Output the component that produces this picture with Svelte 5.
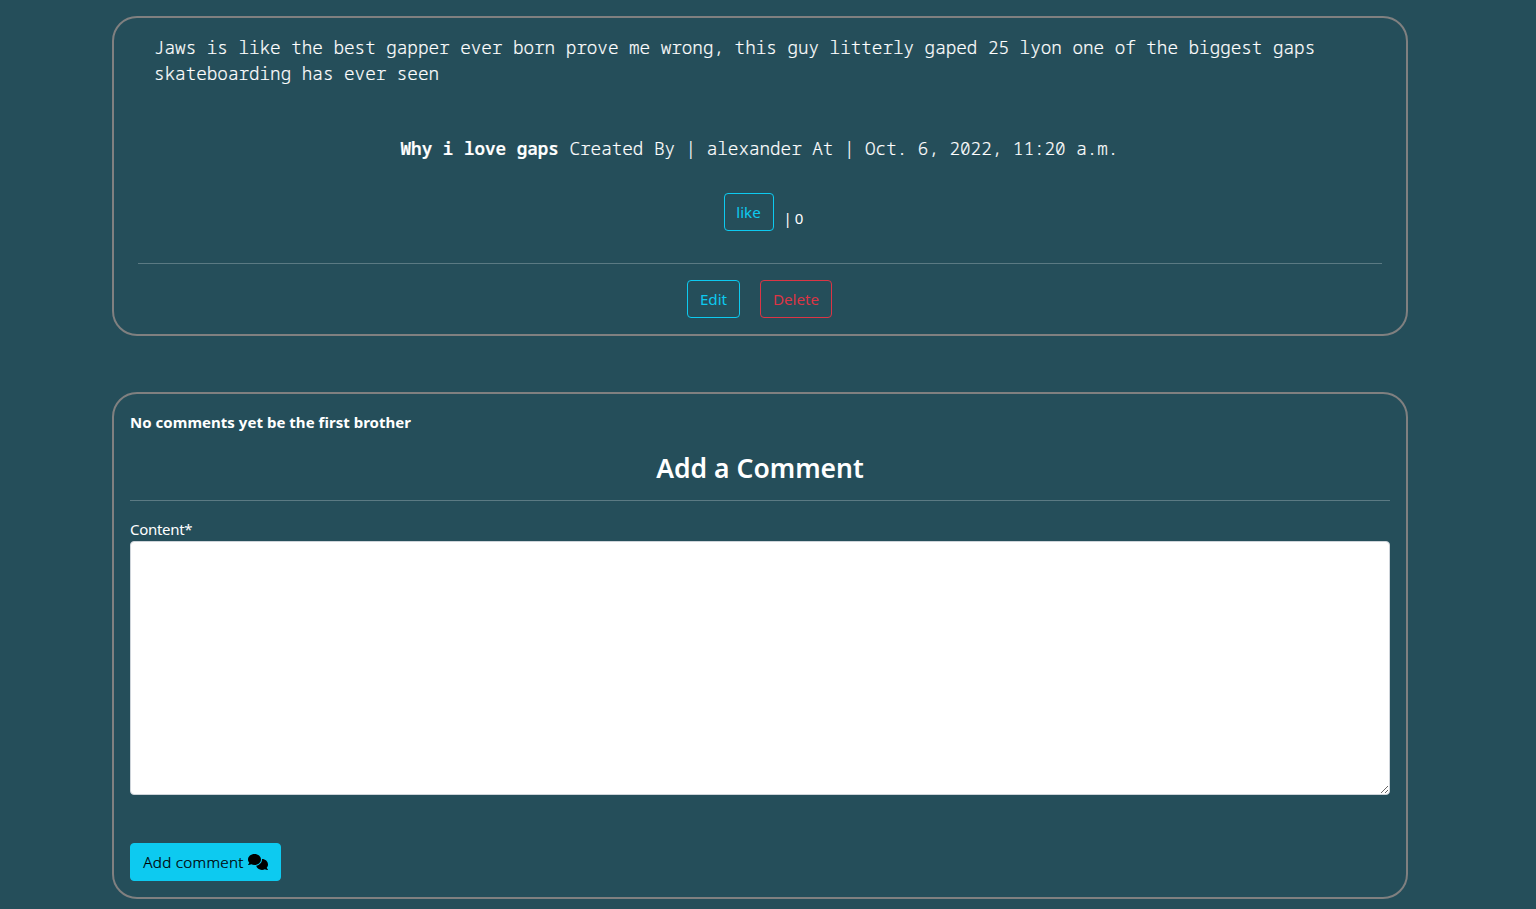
<script>
  let content = $state('');
  let likes = $state(0);
</script>

<main>
  <article class="card post">
    <p class="body">Jaws is like the best gapper ever born prove me wrong, this guy litterly gaped 25 lyon one of the biggest gaps skateboarding has ever seen</p>
    <p class="meta"><strong>Why i love gaps</strong> Created By | alexander At | Oct. 6, 2022, 11:20 a.m.</p>
    <div class="likes">
      <button class="btn info like" onclick={() => likes++}><span>like</span></button>
      <span class="count">| {likes}</span>
    </div>
    <hr />
    <div class="actions">
      <button class="btn info edit"><span>Edit</span></button>
      <button class="btn danger"><span>Delete</span></button>
    </div>
  </article>

  <section class="card comments">
    <p class="empty"><strong>No comments yet be the first brother</strong></p>
    <h3><span>Add a Comment</span></h3>
    <hr />
    <form onsubmit={(e) => e.preventDefault()}>
      <label for="content"><span>Content*</span></label>
      <textarea id="content" bind:value={content}></textarea>
      <button class="btn submit">
        <span>Add comment</span>
        <svg viewBox="0 0 640 512" aria-hidden="true"><path d="M416 176C416 78.800 322.900 0 208 0S0 78.800 0 176c0 39.570 15.620 75.960 41.670 105.400c-16.390 32.760-39.230 57.320-39.590 57.680c-2.100 2.205-2.670 5.475-1.441 8.354C1.900 350.300 4.602 352 7.660 352c38.350 0 70.760-11.120 95.740-24.040C134.200 343.100 169.800 352 208 352C322.900 352 416 273.200 416 176zM599.600 443.700C624.800 413.900 640 376.600 640 336C640 238.800 554 160 448 160c-.3145 0-.6191 .041-.9336 .043C447.500 165.300 448 170.600 448 176c0 98.620-79.680 181.200-186.100 202.500C282.700 455.100 357.100 512 448 512c33.690 0 65.320-8.008 92.850-21.980C565.200 502 596.100 512 632.300 512c3.059 0 5.760-1.725 7.020-4.605c1.229-2.879 .6582-6.148-1.441-8.354C637.600 498.700 615.900 475.300 599.600 443.700z"/></svg>
      </button>
    </form>
  </section>
</main>

<style>
  :global(body) {
    margin: 0;
    background: #254e5a;
    color: #fff;
    font: 15px/24px "Noto Sans", sans-serif;
  }
  main {
    box-sizing: border-box;
    height: 909px;
    padding: 16px 128px 0 112px;
    overflow: hidden;
    display: flex;
    flex-direction: column;
    gap: 56px;
  }
  .card {
    box-sizing: border-box;
    border: 2px solid #808080;
    border-radius: 25px;
    padding: 16px;
  }
  .post {
    height: 320px;
    padding: 16px 24px;
  }
  p, h3, hr { margin: 0; }
  .body, .meta {
    font: 300 17.6px/26.4px "Noto Sans Mono", "DejaVu Sans Mono", monospace;
    -webkit-text-stroke: 0.2px #fff;
  }
  .body { padding: 0 16px; }
  .meta {
    margin-top: 48px;
    padding-right: 1px;
    text-align: center;
  }
  .meta strong { font-weight: 600; }
  .likes {
    display: flex;
    justify-content: center;
    align-items: flex-start;
    gap: 10px;
    margin-top: 32px;
    height: 70px;
  }
  .count { margin-top: 13px; width: 9px; margin-right: 4px; white-space: nowrap; letter-spacing: -0.5px; }
  hr {
    border: 0;
    height: 1px;
    background: #fff;
    opacity: 0.25;
  }
  .actions {
    display: flex;
    justify-content: center;
    gap: 20px;
    margin-top: 16px;
    padding-right: 1px;
  }
  .btn {
    box-sizing: border-box;
    height: 38px;
    border: 1px solid;
    border-radius: 4px;
    background: transparent;
    padding: 0;
    font: 15.2px/24px "Noto Sans", sans-serif;
    display: flex;
    align-items: center;
    justify-content: center;
    width: 72px;
  }
  .info { color: #0dcaf0; }
  .like { width: 50px; }
  .edit { width: 53px; }
  .danger { color: #dc3545; }
  .comments { height: 507px; }
  .empty { letter-spacing: 0.03px; }
  h3 {
    margin-top: 17px;
    font-size: 26.5px;
    line-height: 34px;
    font-weight: 600;
    text-align: center;
  }
  .comments hr { margin-top: 15px; }
  form { padding-top: 16px; }
  label { display: block; letter-spacing: -0.3px; }
  textarea {
    display: block;
    box-sizing: border-box;
    width: 100%;
    height: 254px;
    border: 1px solid #ced4da;
    border-radius: 4px;
    padding: 6px 12px;
    background: #fff;
    font: inherit;
    outline: 0;
  }
  .submit {
    width: 151px;
    margin-top: 48px;
    border-color: #0dcaf0;
    background: #0dcaf0;
    color: #000;
    gap: 4px;
    font-weight: 300;
    letter-spacing: 0.28px;
    -webkit-text-stroke: 0.2px #000;
  }
  .submit svg { width: 20px; height: 16px; overflow: visible; }
</style>
